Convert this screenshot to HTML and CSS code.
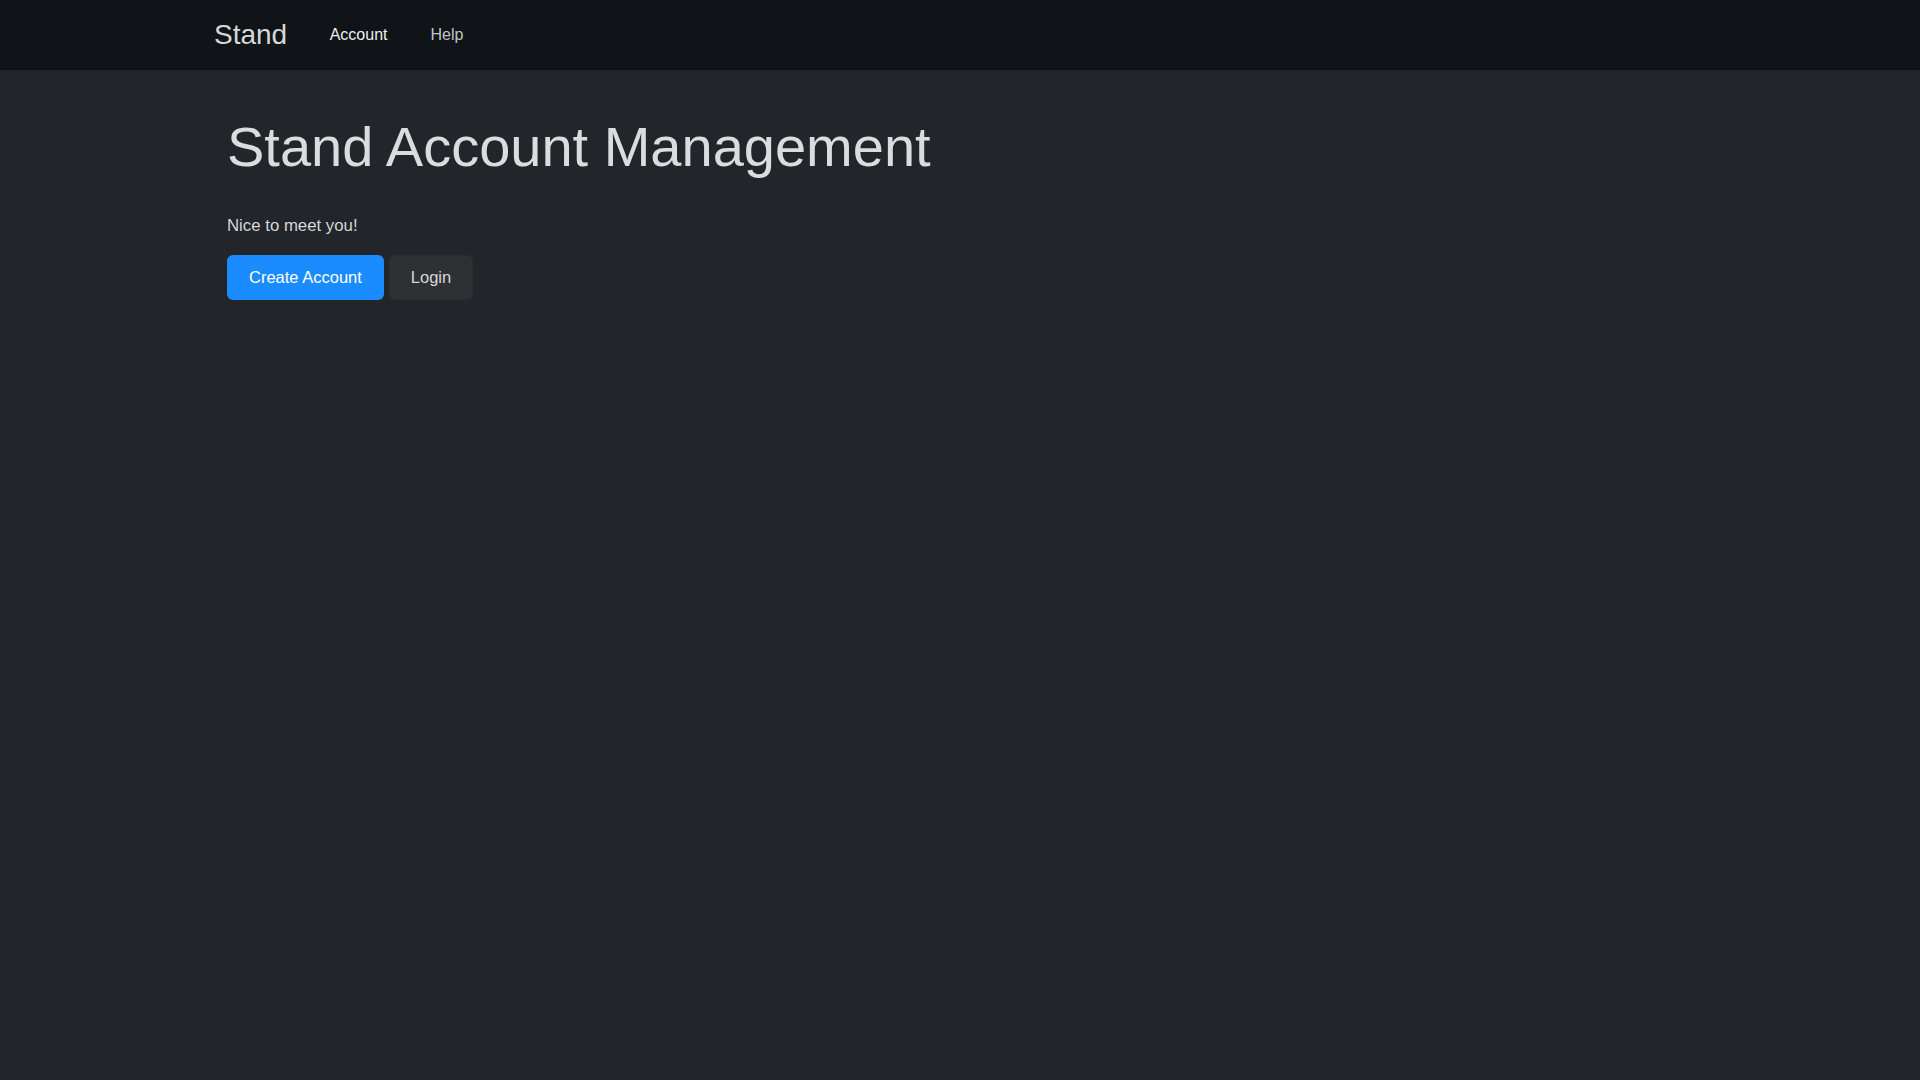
FILE: index.html
```html
<!DOCTYPE html>
<html lang="en">
<head>
<meta charset="utf-8">
<title>Stand Account Management</title>
<link rel="stylesheet" href="styles.css">
</head>
<body>
<nav class="navbar">
  <div class="nav-inner">
    <a class="brand" href="#">Stand</a>
    <a class="nav-link active" href="#">Account</a>
    <a class="nav-link" href="#">Help</a>
  </div>
</nav>
<main class="main">
  <h1 class="title">Stand Account Management</h1>
  <p class="lead">Nice to meet you!</p>
  <div class="actions">
    <a class="btn btn-primary" href="#">Create Account</a>
    <a class="btn btn-secondary" href="#">Login</a>
  </div>
</main>
</body>
</html>
```

FILE: styles.css
```css
html, body {
  margin: 0;
  padding: 0;
}
body {
  background: #222529;
  color: #dee2e6;
  font-family: "Liberation Sans", Arial, sans-serif;
  font-size: 16px;
  line-height: 1.5;
  min-height: 1080px;
}
a {
  text-decoration: none;
}
.navbar {
  background: #101317;
  height: 69px;
  border-bottom: 1px solid #0b0d10;
}
.nav-inner {
  height: 100%;
  display: flex;
  align-items: center;
  padding-left: 214px;
}
.brand {
  font-size: 28px;
  line-height: 42px;
  color: #d6d7d8;
  margin-right: 21px;
}
.nav-link {
  padding: 0 21.5px;
  line-height: 24px;
  color: #c3c5c7;
}
.nav-link.active {
  color: #eceeef;
}
.main {
  padding: 43px 0 0 227px;
}
.title {
  margin: 0;
  font-size: 56px;
  font-weight: 300;
  line-height: 1.2;
  color: #dadcde;
}
.lead {
  margin: 34px 0 0;
  font-size: 16.8px;
  line-height: 24px;
  color: #d5d7d9;
}
.actions {
  margin-top: 17px;
  display: flex;
  gap: 5px;
}
.btn {
  display: inline-flex;
  align-items: center;
  height: 45px;
  padding: 0 22px;
  font-size: 16.5px;
  border-radius: 6px;
  box-sizing: border-box;
}
.btn-primary {
  background: #1a8cff;
  color: #ffffff;
}
.btn-secondary {
  background: #2e3034;
  color: #d6d8da;
  box-shadow: inset 0 0 0 1px #2a2c30;
}
```
